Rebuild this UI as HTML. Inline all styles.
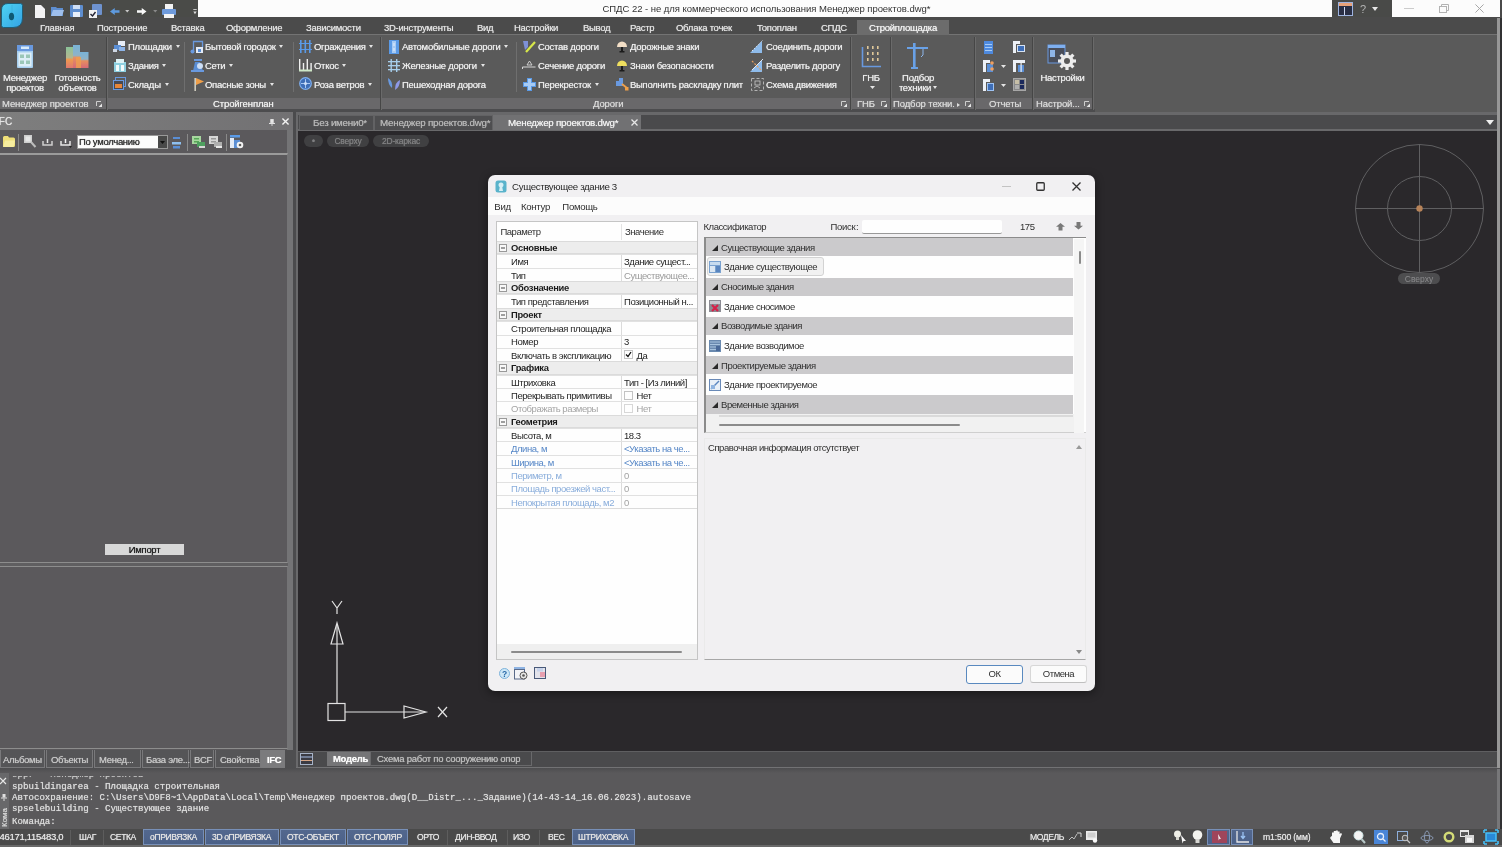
<!DOCTYPE html>
<html lang="ru">
<head>
<meta charset="utf-8">
<title>СПДС 22 - Менеджер проектов.dwg</title>
<style>
*{box-sizing:border-box;margin:0;padding:0}
html,body{width:1502px;height:847px;overflow:hidden;background:#4a4a4a}
body{font-family:"Liberation Sans",sans-serif;font-size:10px;color:#e6e6e6;position:relative}
#root{position:absolute;left:0;top:0;width:1502px;height:847px;overflow:hidden;filter:blur(0.7px);opacity:.999;will-change:transform}
.a{position:absolute}
.t{position:absolute;white-space:nowrap;line-height:12px;text-shadow:0 0 .7px currentColor}
svg{position:absolute;overflow:visible}
/* top */
#titledark{left:0;top:0;width:197.6px;height:19px;background:#4b4c49}
#titlewhite{left:197.6px;top:0;width:1302px;height:18px;background:#fdfdfd}
#titletools{left:1332px;top:0;width:60px;height:18px;background:#4a4b49}
#tabrow{left:0;top:17px;width:1502px;height:18px;background:#4c4c4c}
#ribbon{left:0;top:34.3px;width:1502px;height:74.7px;background:#5b5b5b;border-top:1.5px solid #747474}
#ribbonlab{left:0;top:98px;width:1094px;height:11px;background:#6a696b}
#ribbonbot{left:0;top:109px;width:1502px;height:6px;background:#4d4d4f}
.rt{top:22px;font-size:9.5px;letter-spacing:-0.27px;color:#e2e2e2}
.ri{font-size:9.5px;letter-spacing:-0.27px;color:#ececec}
.rl{top:98.2px;font-size:9.5px;letter-spacing:-0.12px;color:#d8d8d8;line-height:11px}
.vsep{position:absolute;top:37px;width:2.4px;height:72.5px;background:linear-gradient(90deg,#474747 0,#474747 55%,#6b6b6b 56%)}
.isep{position:absolute;top:42px;width:1px;height:50px;background:#707070}
.dd{display:inline-block;width:0;height:0;border-left:2.5px solid transparent;border-right:2.5px solid transparent;border-top:3px solid #e6e6e6;margin-left:3.8px;vertical-align:2px}
.ptab{top:750px;height:18px;border:1px solid #7a7a7c;border-top:0;background:#565658}
.pt{top:754px;font-size:9.5px;letter-spacing:-0.3px;color:#c8c8c8}
.dt{top:117px;font-size:9.8px;letter-spacing:-0.25px;color:#b6b6b6}
.pill{top:135px;height:12px;border-radius:6px;background:#414143}
.pl{top:135px;font-size:8.5px;color:#808082;text-align:center;letter-spacing:-0.2px}
.cm{font-family:"Liberation Mono",monospace;font-size:9.13px;color:#dcdcdc;line-height:12px}
.sb{top:829px;height:16px;background:linear-gradient(#54698f,#4c6289);border:1px solid #7890b8}
.st{top:831px;font-size:8.6px;letter-spacing:-0.4px;color:#e4e4e4}
#dlg{left:488px;top:175px;width:607px;height:515.5px;background:#f2f1f3;border-radius:7px;box-shadow:0 2px 10px rgba(0,0,0,.45)}
.d{font-size:9.5px;letter-spacing:-0.45px;color:#303030;line-height:12px;text-shadow:none}
.gs{left:497px;width:200px;height:13.4px;background:#eeeeee;border-top:1px solid #dcdcdc;border-bottom:1px solid #dcdcdc}
.gr{left:497px;width:200px;height:13.4px;border-top:1px solid #e2e2e2}
.gb{font-weight:bold;font-size:9.4px;letter-spacing:-0.3px;color:#1c1c1c}
/* left panel */
#lp{left:0;top:115px;width:292px;height:655px;background:#5c5a5d}
#lphead{left:0;top:112px;width:292.5px;height:18.3px;background:linear-gradient(90deg,#7f7f7f,#737274)}
/* canvas */
#canvas{left:298px;top:130px;width:1199px;height:621px;background:#2b292c}
/* bottom */
#cmd{left:0;top:770px;width:1502px;height:60px;background:#5b5a5c}
#status{left:0;top:829px;width:1502px;height:18px;background:#4b4b4b}
</style>
</head>
<body>
<div id="root">
<!-- TOP BARS -->
<div class="a" id="titlewhite"></div>
<div class="a" id="titledark"></div>
<div class="a" id="titletools"></div>
<div class="a" id="tabrow"></div>
<div class="a" id="ribbon"></div>
<div class="a" id="ribbonlab"></div>
<div class="a" id="ribbonbot"></div>
<!-- title -->
<div class="t" style="left:602.5px;top:3px;font-size:9.5px;letter-spacing:-0.04px;color:#333;text-shadow:none">СПДС 22 - не для коммерческого использования Менеджер проектов.dwg*</div>
<!-- logo -->
<svg style="left:1px;top:3px" width="22" height="25" viewBox="0 0 22 25"><defs><linearGradient id="lg" x1="0" y1="0" x2="1" y2="1"><stop offset="0" stop-color="#4fd4f2"/><stop offset="1" stop-color="#35a4e6"/></linearGradient></defs><path d="M7 0.500H19.500Q21.500 0.500 21.500 2.500V15Q21.500 24.500 12 24.500H2.500Q0.500 24.500 0.500 22.500V7Q0.500 0.500 7 0.500z" fill="url(#lg)" stroke="#1f5f78" stroke-width="1"/><path d="M11 2v21" stroke="#3cb4e0" stroke-width="1"/><ellipse cx="10.500" cy="13.500" rx="2.600" ry="3.800" fill="#0f5a74"/></svg>
<!-- quick access icons -->
<svg style="left:35px;top:5px" width="10" height="13" viewBox="0 0 10 13"><path d="M0 0h6l4 4v9H0z" fill="#f4f4f4"/></svg>
<svg style="left:51px;top:6px" width="13" height="11" viewBox="0 0 13 11"><path d="M0 1h5l1 1h6v8H0z" fill="#5f8fd0"/><path d="M2 4h11l-2 6H0z" fill="#9fc0ee"/></svg>
<svg style="left:70px;top:5px" width="13" height="12" viewBox="0 0 13 12"><rect width="13" height="12" rx="1" fill="#5f8fd0"/><rect x="3" y="0" width="7" height="4" fill="#cfe0f7"/><rect x="3" y="7" width="7" height="5" fill="#e8f0fb"/></svg>
<svg style="left:89px;top:4px" width="13" height="14" viewBox="0 0 13 14"><rect x="3" y="0" width="10" height="11" rx="1" fill="#6f93cf"/><rect x="0" y="6" width="8" height="8" fill="#f4f4f4"/><path d="M1.5 10l2 2 3-4" stroke="#223" stroke-width="1.4" fill="none"/></svg>
<svg style="left:110px;top:7.500px" width="9.500" height="7" viewBox="0 0 10 9" preserveAspectRatio="none"><path d="M5 0L0 4.5 5 9V6h5V3H5z" fill="#5f9be0"/></svg>
<svg style="left:125px;top:10px" width="4.500" height="2.500" viewBox="0 0 5 3"><path d="M0 0h5L2.5 3z" fill="#c8c8c8"/></svg>
<svg style="left:137px;top:7.500px" width="9.500" height="7" viewBox="0 0 10 9" preserveAspectRatio="none"><path d="M5 0l5 4.5L5 9V6H0V3h5z" fill="#fafafa"/></svg>
<svg style="left:152.500px;top:10px" width="4.500" height="2.500" viewBox="0 0 5 3"><path d="M0 0h5L2.5 3z" fill="#8a8a8a"/></svg>
<svg style="left:162px;top:4px" width="14" height="14" viewBox="0 0 14 14"><rect x="3" y="0" width="8" height="5" fill="#f4f4f4"/><rect x="0" y="5" width="14" height="6" rx="1" fill="#6f9bdc"/><rect x="2" y="10" width="10" height="4" fill="#f4f4f4"/></svg>
<svg style="left:192.500px;top:9px" width="4" height="6" viewBox="0 0 4 7"><rect y="0" width="4" height="1" fill="#ddd"/><path d="M0 3h4L2 6z" fill="#ddd"/></svg>
<!-- right title tools -->
<svg style="left:1338px;top:2px" width="15" height="14" viewBox="0 0 15 14"><rect x="0.5" y="0.5" width="14" height="13" fill="#2a2f45" stroke="#9fb4e0"/><rect x="1" y="1" width="13" height="3" fill="#e8a27a"/><rect x="6" y="5" width="1" height="8" fill="#cfd8f0"/></svg>
<div class="t" style="left:1360px;top:2.5px;font-size:11px;color:#b4b4b4;text-shadow:none">?</div>
<svg style="left:1372px;top:7px" width="6" height="4" viewBox="0 0 6 4"><path d="M0 0h6L3 4z" fill="#e8e8e8"/></svg>
<svg style="left:1404px;top:8px" width="10" height="2" viewBox="0 0 10 2"><rect width="10" height="1" fill="#cdcdcd"/></svg>
<svg style="left:1438.5px;top:3.5px" width="10" height="9" viewBox="0 0 10 9"><rect x="0.5" y="2.5" width="7" height="6" fill="none" stroke="#b4b4b4"/><path d="M2.5 2.5v-2h7v6h-2" fill="none" stroke="#b4b4b4"/></svg>
<svg style="left:1475px;top:3.5px" width="9" height="9" viewBox="0 0 10 10"><path d="M0.5 0.5l9 9M9.5 0.5l-9 9" stroke="#a8a8a8" stroke-width="1.1"/></svg>
<!-- ribbon tabs -->
<div class="a" style="left:857px;top:20px;width:92px;height:15px;background:#6d6d6d"></div>
<div class="t rt" style="left:40px">Главная</div>
<div class="t rt" style="left:97px">Построение</div>
<div class="t rt" style="left:171px">Вставка</div>
<div class="t rt" style="left:226px">Оформление</div>
<div class="t rt" style="left:306px">Зависимости</div>
<div class="t rt" style="left:384px">3D-инструменты</div>
<div class="t rt" style="left:477px">Вид</div>
<div class="t rt" style="left:514px">Настройки</div>
<div class="t rt" style="left:583px">Вывод</div>
<div class="t rt" style="left:630px">Растр</div>
<div class="t rt" style="left:676px">Облака точек</div>
<div class="t rt" style="left:757px">Топоплан</div>
<div class="t rt" style="left:821px">СПДС</div>
<div class="t rt" style="left:869px;color:#f4f4f4">Стройплощадка</div>
<div class="a" style="left:1095px;top:108px;width:407px;height:4px;background:#5b5b5b"></div>
<!-- group separators -->
<div class="vsep" style="left:106px"></div>
<div class="vsep" style="left:380px"></div>
<div class="vsep" style="left:850px"></div>
<div class="vsep" style="left:890px"></div>
<div class="vsep" style="left:974px"></div>
<div class="vsep" style="left:1032px"></div>
<div class="vsep" style="left:1092px"></div>
<div class="isep" style="left:184px"></div>
<div class="isep" style="left:293px"></div>
<div class="isep" style="left:516px"></div>
<!-- group 1 -->
<svg style="left:16.500px;top:45px" width="16" height="23" viewBox="0 0 16 23"><rect x="0" y="0" width="16" height="23" rx="1" fill="#a8d0f0"/><rect x="0" y="0" width="16" height="6" fill="#6a9ae0"/><rect x="4" y="1.500" width="8" height="2.500" fill="#d8ecfc"/><rect x="1.500" y="7.500" width="13" height="14" fill="#dff0f8"/><g fill="#9cc8b8"><rect x="3" y="9.500" width="4" height="3.500"/><rect x="9" y="9.500" width="4" height="3.500"/><rect x="3" y="15.500" width="4" height="3.500"/><rect x="9" y="15.500" width="4" height="3.500"/></g></svg>
<svg style="left:66px;top:45px" width="23" height="23" viewBox="0 0 23 23"><defs><linearGradient id="g2" x1="0" y1="0" x2="0" y2="1"><stop offset="0" stop-color="#7ab4d8"/><stop offset=".45" stop-color="#8fb4c8"/><stop offset=".55" stop-color="#e89060"/><stop offset="1" stop-color="#d86a78"/></linearGradient><linearGradient id="g3" x1="0" y1="0" x2="0" y2="1"><stop offset="0" stop-color="#8cc49a"/><stop offset=".5" stop-color="#b4b890"/><stop offset=".6" stop-color="#f09a50"/><stop offset="1" stop-color="#e07a70"/></linearGradient></defs><rect x="0" y="2" width="7" height="21" fill="url(#g3)"/><rect x="7" y="0" width="7" height="23" fill="url(#g2)"/><rect x="14" y="7" width="8.500" height="16" fill="url(#g2)"/><rect x="10" y="12" width="5" height="11" fill="#f0a050" opacity=".8"/></svg>
<div class="t ri" style="left:0;top:72.7px;width:50px;text-align:center;line-height:10px">Менеджер<br>проектов</div>
<div class="t ri" style="left:50px;top:72.7px;width:55px;text-align:center;line-height:10px">Готовность<br>объектов</div>
<div class="t rl" style="left:2px">Менеджер проектов</div>
<!-- group 2 -->
<div class="t ri" style="left:128px;top:40.6px">Площадки<i class="dd"></i></div>
<div class="t ri" style="left:128px;top:59.6px">Здания<i class="dd"></i></div>
<div class="t ri" style="left:128px;top:78.6px">Склады<i class="dd"></i></div>
<div class="t ri" style="left:205px;top:40.6px">Бытовой городок<i class="dd"></i></div>
<div class="t ri" style="left:205px;top:59.6px">Сети<i class="dd"></i></div>
<div class="t ri" style="left:205px;top:78.6px">Опасные зоны<i class="dd"></i></div>
<div class="t ri" style="left:314px;top:40.6px">Ограждения<i class="dd"></i></div>
<div class="t ri" style="left:314px;top:59.6px">Откос<i class="dd"></i></div>
<div class="t ri" style="left:314px;top:78.6px">Роза ветров<i class="dd"></i></div>
<div class="t rl" style="left:213px;color:#f0f0f0">Стройгенплан</div>
<!-- group 3 -->
<div class="t ri" style="left:402px;top:40.6px">Автомобильные дороги<i class="dd"></i></div>
<div class="t ri" style="left:402px;top:59.6px">Железные дороги<i class="dd"></i></div>
<div class="t ri" style="left:402px;top:78.6px">Пешеходная дорога</div>
<div class="t ri" style="left:538px;top:40.6px">Состав дороги</div>
<div class="t ri" style="left:538px;top:59.6px">Сечение дороги</div>
<div class="t ri" style="left:538px;top:78.6px">Перекресток<i class="dd"></i></div>
<div class="t ri" style="left:630px;top:40.6px">Дорожные знаки</div>
<div class="t ri" style="left:630px;top:59.6px">Знаки безопасности</div>
<div class="t ri" style="left:630px;top:78.6px">Выполнить раскладку плит</div>
<div class="t ri" style="left:766px;top:40.6px">Соединить дороги</div>
<div class="t ri" style="left:766px;top:59.6px">Разделить дорогу</div>
<div class="t ri" style="left:766px;top:78.6px">Схема движения</div>
<div class="t rl" style="left:593px">Дороги</div>
<!-- group 4-7 -->
<div class="t ri" style="left:851px;top:71.7px;width:40px;text-align:center">ГНБ</div>
<div class="t rl" style="left:857px">ГНБ</div>
<div class="t ri" style="left:892px;top:72.7px;width:52px;text-align:center;line-height:10px">Подбор<br>техники<i class="dd" style="margin-left:2px"></i></div>
<div class="t rl" style="left:893px">Подбор техни.</div>
<div class="t rl" style="left:989px">Отчеты</div>
<div class="t ri" style="left:1034px;top:71.7px;width:57px;text-align:center">Настройки</div>
<div class="t rl" style="left:1036px">Настрой...</div>

<!-- small icons group 2 -->
<svg style="left:113px;top:41px" width="13" height="12" viewBox="0 0 13 12"><rect x="5" y="0" width="7" height="5" fill="#e8eef8"/><rect x="1" y="4" width="7" height="5" fill="#5b8fd6"/><rect x="6" y="6" width="6" height="4" fill="#8fb6ea"/><rect x="0" y="8" width="4" height="3" fill="#d0d8e4"/></svg>
<svg style="left:114px;top:59px" width="12" height="13" viewBox="0 0 12 13"><rect x="0" y="3" width="12" height="10" fill="#8fd0e0"/><rect x="2" y="0" width="8" height="4" fill="#dff3f6"/><rect x="2" y="6" width="3" height="6" fill="#f4fbfc"/><rect x="7" y="6" width="3" height="6" fill="#f4fbfc"/></svg>
<svg style="left:113px;top:77px" width="13" height="13" viewBox="0 0 13 13"><rect x="2.5" y="0.5" width="10" height="9" fill="none" stroke="#6a9ae0"/><rect x="0.5" y="3.5" width="10" height="9" fill="#4a4a52" stroke="#6a9ae0"/><rect x="2" y="7" width="7" height="4" fill="#e8873a"/></svg>
<svg style="left:190px;top:40px" width="14" height="14" viewBox="0 0 14 14"><path d="M3.5 11V1.5h9V8" fill="none" stroke="#6a9ae0" stroke-width="1.3"/><circle cx="2.5" cy="11.5" r="2" fill="#6a9ae0"/><rect x="6" y="7" width="7" height="6" fill="#e4ecf8"/><rect x="8" y="9" width="3" height="3" fill="#5b8fd6"/></svg>
<svg style="left:191px;top:59px" width="13" height="13" viewBox="0 0 13 13"><rect x="3" y="0" width="8" height="2" fill="#6a9ae0"/><path d="M2 12l2-9h5l3 9z" fill="#5b8fd6"/><circle cx="9" cy="7" r="3" fill="#cfe0f6"/><rect x="0" y="11" width="13" height="2" fill="#6a9ae0"/></svg>
<svg style="left:194px;top:77px" width="10" height="14" viewBox="0 0 10 14"><rect x="0.5" y="1" width="1.3" height="13" fill="#ece8d8"/><path d="M2 1l8 3.5L2 8z" fill="#f0a04a"/></svg>
<svg style="left:299px;top:40px" width="13" height="13" viewBox="0 0 13 13"><g fill="#5b9be8"><rect x="1" y="0" width="1.6" height="13"/><rect x="5.5" y="0" width="1.6" height="13"/><rect x="10" y="0" width="1.6" height="13"/><rect x="0" y="3" width="13" height="1"/><rect x="0" y="9" width="13" height="1"/></g></svg>
<svg style="left:299px;top:59px" width="13" height="13" viewBox="0 0 13 13"><g fill="#f0f0f0"><rect x="0" y="0" width="1.4" height="11"/><rect x="3.8" y="4" width="1.4" height="7"/><rect x="7.6" y="0" width="1.4" height="11"/><rect x="11.4" y="4" width="1.4" height="7"/></g><rect x="0" y="10.5" width="13" height="2" fill="#cfe8c8"/></svg>
<svg style="left:299px;top:77px" width="13" height="13" viewBox="0 0 13 13"><circle cx="6.5" cy="6.5" r="5.8" fill="#3f6fb8" stroke="#7fb0f0" stroke-width="1.2"/><path d="M6.5 2v9M2 6.5h9" stroke="#a8c8f4" stroke-width="1"/><circle cx="6.5" cy="6.5" r="1.5" fill="#cfe0f8"/></svg>
<!-- small icons group 3 -->
<svg style="left:389px;top:40px" width="10" height="14" viewBox="0 0 10 14"><rect x="0" y="0" width="10" height="14" fill="#5b9be8"/><rect x="3" y="1" width="4" height="12" fill="#a8ccf6"/><rect x="4.5" y="3" width="1" height="3" fill="#e8f0fc"/><rect x="4.5" y="8" width="1" height="3" fill="#e8f0fc"/></svg>
<svg style="left:388px;top:59px" width="12" height="13" viewBox="0 0 12 13"><g fill="#a8d0ee"><rect x="2.5" y="0" width="1.4" height="13"/><rect x="8" y="0" width="1.4" height="13"/><rect x="0" y="2" width="12" height="1.3"/><rect x="0" y="6" width="12" height="1.3"/><rect x="0" y="10" width="12" height="1.3"/></g></svg>
<svg style="left:388px;top:78px" width="12" height="12" viewBox="0 0 12 12"><path d="M0 0q5 3 4 10Q0 7 0 0z" fill="#6a9ae0"/><path d="M12 2q-5 2-5 10 5-3 5-10z" fill="#8f9ae8"/></svg>
<svg style="left:522px;top:40px" width="14" height="13" viewBox="0 0 14 13"><path d="M1 1h5v6l-3 3z" fill="#7f92d8"/><path d="M4 12L13 2" stroke="#d8e84a" stroke-width="2.2"/></svg>
<svg style="left:522px;top:59px" width="14" height="12" viewBox="0 0 14 12"><path d="M0.5 10V8h13" fill="none" stroke="#d8d8d8" stroke-width="1"/><path d="M5 6l2.500-4 2.500 4z" fill="none" stroke="#d8d8d8" stroke-width="0.9"/></svg>
<svg style="left:523px;top:78px" width="13" height="13" viewBox="0 0 13 13"><path d="M4 0h5v4h4v5H9v4H4V9H0V4h4z" fill="#5b9be8"/><path d="M5 1h3v4h4v3H8v4H5V8H1V5h4z" fill="#a8ccf6"/></svg>
<svg style="left:617px;top:40px" width="10" height="13" viewBox="0 0 10 13"><path d="M0 7a5 5.500 0 0110 0z" fill="#f4e0c8"/><rect x="4" y="7" width="2" height="5" fill="#1c1c1c"/><rect x="2.500" y="11" width="5" height="1.500" fill="#1c1c1c"/></svg>
<svg style="left:617px;top:59px" width="10" height="13" viewBox="0 0 10 13"><path d="M0 7a5 5.500 0 0110 0z" fill="#f0e060"/><rect x="4" y="7" width="2" height="5" fill="#1c1c1c"/><rect x="2.500" y="11" width="5" height="1.500" fill="#1c1c1c"/></svg>
<svg style="left:616px;top:78px" width="13" height="13" viewBox="0 0 13 13"><path d="M0 3h3V0h4v8H0z" fill="#6a9ae0"/><path d="M6 6l5 4" stroke="#f0a04a" stroke-width="1.800"/><rect x="9" y="9" width="3.500" height="3.500" fill="#f0a04a"/></svg>
<svg style="left:750px;top:40px" width="14" height="13" viewBox="0 0 14 13"><path d="M0 13L12 1v12z" fill="#8fbcec"/><path d="M2 11L13 0" stroke="#dfe8f4" stroke-width="1" stroke-dasharray="1.500 1.500"/></svg>
<svg style="left:750px;top:59px" width="14" height="13" viewBox="0 0 14 13"><path d="M0 13L12 1v12z" fill="#8fbcec"/><path d="M2 2l10 10" stroke="#e8a060" stroke-width="1.200" stroke-dasharray="2 1.500"/><path d="M2 11L13 0" stroke="#dfe8f4" stroke-width="1"/></svg>
<svg style="left:751px;top:78px" width="13" height="13" viewBox="0 0 13 13"><rect x="0.500" y="0.500" width="12" height="12" fill="none" stroke="#b4b4b4" stroke-width="1" stroke-dasharray="3 2"/><rect x="4" y="3" width="5" height="4" fill="none" stroke="#c8c8c8" stroke-width="0.800"/><path d="M3 10l3-2 3 2" fill="none" stroke="#c8c8c8" stroke-width="0.800"/></svg>
<!-- big icons group 4,5,7 -->
<svg style="left:861px;top:44px" width="20" height="25" viewBox="0 0 20 25"><path d="M1.500 3v19.500H20" fill="none" stroke="#6a9ae0" stroke-width="1.600"/><g fill="#e0c89a"><rect x="6" y="2" width="1.600" height="3"/><rect x="11" y="2" width="1.600" height="3"/><rect x="16" y="2" width="1.600" height="3"/><rect x="6" y="8" width="1.600" height="3"/><rect x="11" y="8" width="1.600" height="3"/><rect x="16" y="8" width="1.600" height="3"/><rect x="6" y="14" width="1.600" height="3"/><rect x="11" y="14" width="1.600" height="3"/><rect x="16" y="14" width="1.600" height="3"/></g></svg>
<svg style="left:870px;top:86px" width="5" height="3" viewBox="0 0 5 3"><path d="M0 0h5L2.500 3z" fill="#e6e6e6"/></svg>
<svg style="left:907px;top:43px" width="22" height="27" viewBox="0 0 22 27"><rect x="6" y="0" width="2.600" height="26" fill="#6aa2e8"/><rect x="0" y="4" width="21" height="2" fill="#6aa2e8"/><path d="M16 6v6l-2 2" fill="none" stroke="#8fb8ec" stroke-width="1"/><rect x="4" y="24" width="7" height="2" fill="#6aa2e8"/></svg>
<svg style="left:1047px;top:44px" width="30" height="27" viewBox="0 0 30 27"><rect x="1" y="1" width="17" height="18" fill="#4a4f5c" stroke="#6a9ae0" stroke-width="1"/><rect x="1" y="1" width="17" height="3" fill="#7fb0f0"/><rect x="3" y="6" width="5" height="7" fill="#8fb6ea"/><g transform="translate(20,17)"><circle r="6.500" fill="#eeeeee"/><g fill="#eeeeee"><rect x="-1.600" y="-9" width="3.200" height="18"/><rect x="-9" y="-1.600" width="18" height="3.200"/><rect x="-1.600" y="-9" width="3.200" height="18" transform="rotate(45)"/><rect x="-1.600" y="-9" width="3.200" height="18" transform="rotate(-45)"/></g><circle r="3" fill="#5b5b5b"/></g></svg>
<!-- reports small icons -->
<svg style="left:984px;top:41px" width="9" height="13" viewBox="0 0 9 13"><rect width="9" height="13" fill="#4f8be0"/><rect x="1" y="3" width="7" height="1" fill="#a8ccf6"/><rect x="1" y="6" width="7" height="1" fill="#a8ccf6"/><rect x="1" y="9" width="7" height="1" fill="#a8ccf6"/></svg>
<svg style="left:983px;top:60px" width="12" height="12" viewBox="0 0 12 12"><path d="M0 0h7v3H3v9H0z" fill="#eef2f8"/><rect x="4" y="4" width="6" height="8" fill="#5b8fd6"/><circle cx="9" cy="3" r="1.800" fill="#f0a060"/><circle cx="9" cy="9" r="1.800" fill="#f0a060"/></svg>
<svg style="left:983px;top:79px" width="12" height="12" viewBox="0 0 12 12"><path d="M0 0h7v3H3v9H0z" fill="#eef2f8"/><rect x="4.500" y="4.500" width="6" height="7" fill="#3f6fb8" stroke="#9fc4f4" stroke-width="1"/></svg>
<svg style="left:1001px;top:65px" width="5" height="3" viewBox="0 0 5 3"><path d="M0 0h5L2.500 3z" fill="#e6e6e6"/></svg>
<svg style="left:1001px;top:84px" width="5" height="3" viewBox="0 0 5 3"><path d="M0 0h5L2.500 3z" fill="#e6e6e6"/></svg>
<svg style="left:1013px;top:41px" width="12" height="12" viewBox="0 0 12 12"><path d="M0 0h7v3H3v9H0z" fill="#eef2f8"/><rect x="4.500" y="4.500" width="7" height="6" fill="#3f6fb8" stroke="#d8e4f4" stroke-width="1"/></svg>
<svg style="left:1013px;top:60px" width="12" height="12" viewBox="0 0 12 12"><path d="M0 0h12v3H3v9H0z" fill="#eef2f8"/><rect x="5" y="5" width="6" height="7" fill="#5b8fd6"/><rect x="7.500" y="3" width="1.200" height="9" fill="#eef2f8"/></svg>
<svg style="left:1013px;top:78px" width="13" height="13" viewBox="0 0 13 13"><rect x="0.500" y="0.500" width="12" height="12" fill="#8a8a8a" stroke="#a8a8a8"/><rect x="2" y="2" width="4" height="4" fill="#c8c0a8"/><rect x="7" y="2" width="4" height="4" fill="#1c2a5c"/><rect x="2" y="7" width="4" height="4" fill="#b0b0b0"/><rect x="7" y="7" width="4" height="4" fill="#1c2a5c"/></svg>
<!-- launchers -->
<svg class="ln" style="left:96px;top:101px" width="6" height="6" viewBox="0 0 6 6"><path d="M0.500 5V0.500H5" fill="none" stroke="#cfcfcf"/><path d="M6 2.500V6H2.500z" fill="#e8e8e8"/></svg>
<svg class="ln" style="left:841px;top:101px" width="6" height="6" viewBox="0 0 6 6"><path d="M0.500 5V0.500H5" fill="none" stroke="#cfcfcf"/><path d="M6 2.500V6H2.500z" fill="#e8e8e8"/></svg>
<svg class="ln" style="left:881px;top:101px" width="6" height="6" viewBox="0 0 6 6"><path d="M0.500 5V0.500H5" fill="none" stroke="#cfcfcf"/><path d="M6 2.500V6H2.500z" fill="#e8e8e8"/></svg>
<svg class="ln" style="left:965px;top:101px" width="6" height="6" viewBox="0 0 6 6"><path d="M0.500 5V0.500H5" fill="none" stroke="#cfcfcf"/><path d="M6 2.500V6H2.500z" fill="#e8e8e8"/></svg>
<svg class="ln" style="left:1084px;top:101px" width="6" height="6" viewBox="0 0 6 6"><path d="M0.500 5V0.500H5" fill="none" stroke="#cfcfcf"/><path d="M6 2.500V6H2.500z" fill="#e8e8e8"/></svg>
<svg style="left:957px;top:103px" width="3" height="4" viewBox="0 0 3 4"><path d="M0 0l3 2-3 2z" fill="#e0e0e0"/></svg>

<!-- LEFT PANEL -->
<div class="a" id="lp"></div>
<div class="a" id="lphead"></div>
<!-- left panel -->
<div class="a" style="left:287px;top:130px;width:5.500px;height:620px;background:#757577"></div>
<div class="a" style="left:293px;top:112px;width:3px;height:658px;background:#4c4c4e"></div>
<div class="a" style="left:296px;top:112px;width:2.500px;height:658px;background:#6a6a6c"></div>
<div class="t" style="left:-4px;top:115.500px;font-size:10px;color:#e4e4e4">IFC</div>
<svg style="left:268.500px;top:118.500px" width="6" height="7" viewBox="0 0 7 8"><rect x="1.500" y="0" width="4" height="4.500" fill="#e8e8e8"/><rect x="0" y="4.500" width="7" height="1.200" fill="#e8e8e8"/><rect x="3" y="5.500" width="1" height="2.500" fill="#e8e8e8"/></svg>
<svg style="left:281.500px;top:118px" width="7" height="7" viewBox="0 0 8 8"><path d="M0.500 0.500l7 7M7.500 0.500l-7 7" stroke="#f4f4f4" stroke-width="1.600"/></svg>
<!-- toolbar -->
<svg style="left:3px;top:136px" width="12" height="11" viewBox="0 0 12 11"><path d="M0 1.500Q0 0 1.500 0H5l1 1.500h4.500Q12 1.500 12 3v6.500Q12 11 10.500 11h-9Q0 11 0 9.500z" fill="#f0e07a"/><path d="M2 4.500h10l-1.500 6.500H0z" fill="#f8eea0"/></svg>
<div class="a" style="left:18px;top:134px;width:1px;height:17px;background:#8a8a8a"></div>
<svg style="left:24px;top:135px" width="12" height="13" viewBox="0 0 12 13"><rect x="0" y="0" width="8" height="8" fill="#cfcfcf"/><rect x="1.500" y="1.500" width="5" height="5" fill="#e8e8e8"/><path d="M7 7l4.500 5" stroke="#bdbdbd" stroke-width="2"/></svg>
<svg style="left:42px;top:139px" width="11" height="8" viewBox="0 0 11 8"><path d="M1 2v4h9V2" fill="none" stroke="#d0d0d0" stroke-width="1.500"/><path d="M5.500 0v4" stroke="#e8e8e8" stroke-width="1.500"/></svg>
<svg style="left:60px;top:139px" width="12" height="9" viewBox="0 0 12 9"><path d="M1 2v4h9V2" fill="none" stroke="#e8e8e8" stroke-width="1.500"/><path d="M5.500 0v4" stroke="#f4f4f4" stroke-width="1.500"/><path d="M9 7h3l-1.500 2z" fill="#222"/></svg>
<div class="a" style="left:77px;top:135px;width:91px;height:14px;background:#fdfdfd;border:1px solid #9a9a9a"></div>
<div class="a" style="left:158px;top:136px;width:9px;height:12px;background:#4a4a4a"></div>
<svg style="left:160px;top:141px" width="5" height="3" viewBox="0 0 5 3"><path d="M0 0h5L2.500 3z" fill="#111"/></svg>
<div class="t" style="left:79px;top:136px;font-size:9.500px;letter-spacing:-0.300px;color:#333">По умолчанию</div>
<svg style="left:172px;top:137px" width="9" height="12" viewBox="0 0 9 12"><rect x="1" y="0" width="7" height="2" fill="#5b8fd6"/><rect x="0" y="5" width="9" height="2.500" fill="#8fc0f0"/><rect x="1" y="9" width="7" height="2.500" fill="#5b8fd6"/></svg>
<div class="a" style="left:187px;top:134px;width:1px;height:17px;background:#8a8a8a"></div>
<svg style="left:192px;top:136px" width="13" height="12" viewBox="0 0 13 12"><rect x="0" y="0" width="9" height="8" fill="#a8d8a0"/><rect x="2" y="2" width="5" height="1.500" fill="#58a858"/><rect x="2" y="5" width="5" height="1.500" fill="#58a858"/><rect x="5" y="6" width="8" height="5" fill="#4fa060"/><rect x="7" y="10" width="6" height="2" fill="#d8d8d8"/></svg>
<svg style="left:209px;top:136px" width="13" height="12" viewBox="0 0 13 12"><rect x="0" y="0" width="9" height="8" fill="#d8d8d8"/><rect x="2" y="2" width="5" height="1.500" fill="#9a9a9a"/><rect x="2" y="5" width="5" height="1.500" fill="#9a9a9a"/><rect x="5" y="6" width="8" height="5" fill="#b0b0b0"/><rect x="7" y="10" width="6" height="2" fill="#eaeaea"/></svg>
<div class="a" style="left:226px;top:134px;width:1px;height:17px;background:#8a8a8a"></div>
<svg style="left:230px;top:135px" width="14" height="14" viewBox="0 0 14 14"><rect x="0" y="0" width="10" height="2.500" fill="#5b9be8"/><rect x="0" y="3" width="4" height="10" fill="#e4ecf8"/><rect x="4" y="5" width="6" height="8" fill="#5b8fd6"/><circle cx="10" cy="10" r="3.300" fill="#f4f4f4"/><circle cx="10" cy="10" r="1.300" fill="#5b5b5b"/></svg>
<!-- boxes -->
<div class="a" style="left:-1px;top:153px;width:289px;height:410px;border:1px solid #8e8e8e;border-top:2px solid #9c9c9c;border-right-color:#757577"></div>
<div class="a" style="left:-1px;top:563px;width:289px;height:4px;background:#616062"></div>
<div class="a" style="left:-1px;top:566px;width:289px;height:183px;border:1px solid #8e8e8e;border-right-color:#757577"></div>
<div class="a" style="left:105px;top:544px;width:79px;height:11px;background:#d9d9d9"></div>
<div class="t" style="left:105px;top:544px;width:79px;text-align:center;font-size:9.500px;letter-spacing:-0.300px;color:#222;line-height:11px">Импорт</div>
<!-- bottom tabs -->
<div class="a" style="left:0;top:750px;width:296px;height:18px;background:#4f4f51"></div>
<div class="a ptab" style="left:0px;width:45px"></div>
<div class="a ptab" style="left:46px;width:47px"></div>
<div class="a ptab" style="left:94px;width:47px"></div>
<div class="a ptab" style="left:142px;width:47px"></div>
<div class="a ptab" style="left:190px;width:24px"></div>
<div class="a ptab" style="left:215px;width:46px"></div>
<div class="a" style="left:261px;top:750px;width:24px;height:18px;background:#7c7c7e"></div>
<div class="t pt" style="left:3px">Альбомы</div>
<div class="t pt" style="left:51px">Объекты</div>
<div class="t pt" style="left:99px">Менед...</div>
<div class="t pt" style="left:146px">База эле...</div>
<div class="t pt" style="left:194px">BCF</div>
<div class="t pt" style="left:220px">Свойства</div>
<div class="t pt" style="left:267px;color:#fff;font-weight:bold">IFC</div>

<!-- CANVAS -->
<div class="a" id="canvas"></div>
<!-- doc tabs -->
<div class="a" style="left:296px;top:112px;width:1206px;height:3.500px;background:#69696b"></div>
<div class="a" style="left:298px;top:115px;width:1199px;height:15px;background:#4b4b4d"></div>
<div class="a" style="left:298px;top:129px;width:1199px;height:2px;background:#6a6a6c"></div>
<div class="a" style="left:1497.400px;top:18px;width:2.200px;height:751px;background:#989898"></div>

<div class="a" style="left:299px;top:115px;width:75px;height:15px;background:#4f4f51;border:1px solid #636365;border-bottom:0"></div>
<div class="a" style="left:374px;top:115px;width:119px;height:15px;background:#4f4f51;border:1px solid #636365;border-bottom:0"></div>
<div class="a" style="left:493px;top:115px;width:148px;height:15px;background:#727274"></div>
<div class="t dt" style="left:313px">Без имени0*</div>
<div class="t dt" style="left:380px">Менеджер проектов.dwg*</div>
<div class="t dt" style="left:508px;color:#f2f2f2">Менеджер проектов.dwg*</div>
<svg style="left:631px;top:119px" width="7" height="7" viewBox="0 0 7 7"><path d="M0.500 0.500l6 6M6.500 0.500l-6 6" stroke="#e8e8e8" stroke-width="1.300"/></svg>
<svg style="left:1486px;top:120px" width="8" height="5" viewBox="0 0 8 5"><path d="M0 0h8L4 5z" fill="#f0f0f0"/></svg>
<!-- view pills -->
<div class="a pill" style="left:304px;width:19px"></div>
<div class="a pill" style="left:327px;width:42px"></div>
<div class="a pill" style="left:373px;width:56px"></div>
<div class="t pl" style="left:304px;width:19px">•</div>
<div class="t pl" style="left:327px;width:42px">Сверху</div>
<div class="t pl" style="left:373px;width:56px">2D-каркас</div>
<!-- compass -->
<svg style="left:1350px;top:140px" width="140" height="150" viewBox="0 0 140 150"><g fill="none" stroke="#606062" stroke-width="1"><circle cx="69.500" cy="68.500" r="64"/><circle cx="69.500" cy="68.500" r="32"/><path d="M69.500 4v130M5 68.500h129"/></g><circle cx="69.500" cy="68.500" r="3.200" fill="#b8845a"/><rect x="48" y="133" width="42" height="11" rx="5.500" fill="#4e4e50"/><text x="69" y="142" font-family="Liberation Sans, sans-serif" font-size="8.500" fill="#8c8c8e" text-anchor="middle">Сверху</text></svg>
<!-- ucs -->
<svg style="left:320px;top:595px" width="140" height="135" viewBox="0 0 140 135"><g fill="none" stroke="#e4e4e4" stroke-width="1.200"><rect x="8" y="108.500" width="17" height="17"/><path d="M17 108V30M25 117h80"/><path d="M17 28l-6 21h12z"/><path d="M106 117l-22-6v12z"/><path d="M12 6l5 7 5-7M17 13v6"/><path d="M118 112l9 10M127 112l-9 10"/></g></svg>
<!-- model tabs -->
<div class="a" style="left:298px;top:750.500px;width:1199px;height:2px;background:#606062"></div>
<div class="a" style="left:298px;top:752px;width:1199px;height:15px;background:#4b4b4d"></div>
<div class="a" style="left:296px;top:766.800px;width:1201px;height:2.200px;background:#737375"></div>
<svg style="left:300px;top:753px" width="13" height="12" viewBox="0 0 13 12"><rect x="0.500" y="0.500" width="12" height="11" fill="#3c3c44" stroke="#a8b4c8"/><rect x="1" y="3.500" width="11" height="1" fill="#a8c0e8"/><rect x="1" y="7" width="11" height="1" fill="#d8a888"/></svg>
<div class="a" style="left:327px;top:752px;width:43px;height:14px;background:#767678"></div>
<div class="a" style="left:370px;top:752px;width:162px;height:14px;border:1px solid #6a6a6c;border-top:0"></div>
<div class="t" style="left:333px;top:753px;font-size:9.500px;letter-spacing:-0.300px;color:#fafafa;font-weight:bold">Модель</div>
<div class="t" style="left:377px;top:753px;font-size:9.500px;letter-spacing:-0.250px;color:#bdbdbd">Схема работ по сооружению опор</div>

<!-- BOTTOM -->
<div class="a" id="cmd"></div>
<div class="a" id="status"></div>
<!-- command area -->
<div class="a" style="left:0;top:768px;width:1502px;height:5px;background:linear-gradient(#4e4e50,#5b5a5c)"></div>
<div class="a" style="left:0;top:773px;width:9px;height:56px;background:#69696b"></div>
<svg style="left:0px;top:778px" width="6" height="6" viewBox="0 0 6 6"><path d="M0 0l6 6M6 0l-6 6" stroke="#e8e8e8" stroke-width="1.200"/></svg>
<div class="a" style="left:12px;top:775.500px;width:300px;height:8px;overflow:hidden"><div class="t cm" style="left:0;top:-6.500px;color:#c8c8c8">sppr - Менеджер проектов</div></div>
<div class="t cm" style="left:12px;top:780.5px">spbuildingarea - Площадка строительная</div>
<div class="t cm" style="left:12px;top:791.8px">Автосохранение: C:\Users\D9F8~1\AppData\Local\Temp\Менеджер проектов.dwg(D__Distr_..._Задание)(14-43-14_16.06.2023).autosave</div>
<div class="t cm" style="left:12px;top:803.2px">spselebuilding - Существующее здание</div>
<div class="t cm" style="left:12px;top:816px">Команда:</div>
<div class="t" style="left:9px;top:818px;font-size:8px;color:#d8d8d8;transform:rotate(-90deg);transform-origin:0 100%;line-height:9px">Кома</div>
<svg style="left:1px;top:794px" width="6" height="7" viewBox="0 0 6 7"><rect x="1.500" y="0" width="3" height="3.500" fill="#e0e0e0"/><rect x="0" y="3.500" width="6" height="1" fill="#e0e0e0"/><rect x="2.500" y="4.500" width="1" height="2.500" fill="#e0e0e0"/></svg>
<!-- status bar -->
<div class="a" style="left:0;top:845px;width:1502px;height:2px;background:#6a6a6a"></div>
<div class="a sb" style="left:143px;width:61px"></div>
<div class="a sb" style="left:205px;width:74px"></div>
<div class="a sb" style="left:280px;width:66px"></div>
<div class="a sb" style="left:347px;width:61px"></div>
<div class="a sb" style="left:572px;width:63px"></div>
<div class="a" style="left:103px;top:830px;width:1px;height:15px;background:#5e5e5e"></div>
<div class="a" style="left:447px;top:830px;width:1px;height:15px;background:#5e5e5e"></div>
<div class="a" style="left:506.5px;top:830px;width:1px;height:15px;background:#5e5e5e"></div>
<div class="a" style="left:538.5px;top:830px;width:1px;height:15px;background:#5e5e5e"></div>
<div class="a" style="left:70px;top:830px;width:1px;height:15px;background:#5e5e5e"></div>

<div class="t st" style="left:-5.5px;font-size:9.5px;letter-spacing:-0.3px;top:830.5px">346171,115483,0</div>
<div class="t st" style="left:79px">ШАГ</div>
<div class="t st" style="left:110px">СЕТКА</div>
<div class="t st" style="left:150px">оПРИВЯЗКА</div>
<div class="t st" style="left:212px">3D оПРИВЯЗКА</div>
<div class="t st" style="left:287px">ОТС-ОБЪЕКТ</div>
<div class="t st" style="left:354px">ОТС-ПОЛЯР</div>
<div class="t st" style="left:417px">ОРТО</div>
<div class="t st" style="left:455px">ДИН-ВВОД</div>
<div class="t st" style="left:513px">ИЗО</div>
<div class="t st" style="left:548px">ВЕС</div>
<div class="t st" style="left:578px">ШТРИХОВКА</div>
<div class="t st" style="left:1030px;font-size:8.600px">МОДЕЛЬ</div>
<div class="t st" style="left:1263px;font-size:8.600px;letter-spacing:-0.1px">m1:500 (мм)</div>
<!-- status right icons -->
<svg style="left:1068px;top:832px" width="14" height="10" viewBox="0 0 14 10"><path d="M1 8l3-3 2 2 3-5" fill="none" stroke="#bdbdbd" stroke-width="1"/><path d="M9 1h4v4" fill="none" stroke="#d8d8d8" stroke-width="1"/></svg>
<svg style="left:1086px;top:831px" width="12" height="12" viewBox="0 0 12 12"><rect x="0" y="0" width="11" height="9" fill="#ececec"/><rect x="1.500" y="1.500" width="8" height="5" fill="#cfcfcf"/><circle cx="9" cy="9.500" r="2.200" fill="#fafafa"/></svg>
<svg style="left:1173px;top:830px" width="14" height="14" viewBox="0 0 14 14"><circle cx="4.500" cy="4" r="3.500" fill="#f0f0e8"/><rect x="3" y="7" width="3" height="3" fill="#d8d8d0"/><path d="M8 5l5 6-2.500 0-1 2.500z" fill="#fafafa"/></svg>
<svg style="left:1192px;top:830px" width="11" height="14" viewBox="0 0 11 14"><circle cx="5.500" cy="5" r="4.800" fill="#f4f4f0"/><rect x="3.500" y="9" width="4" height="4" fill="#d8d8d4"/></svg>
<div class="a sb" style="left:1207px;width:23px"></div>
<div class="a sb" style="left:1231px;width:22px"></div>
<svg style="left:1212px;top:831px" width="15" height="12" viewBox="0 0 15 12"><rect width="15" height="12" fill="#a0465c"/><path d="M6 3l3 5-1.500-.3-.8 1.800z" fill="#f4f4f4"/></svg>
<svg style="left:1235px;top:831px" width="14" height="13" viewBox="0 0 14 13"><path d="M2 0v11h12" fill="none" stroke="#e8e8e8" stroke-width="1.300"/><path d="M8 1v6M6 5l2 2.500 2-2.500" fill="none" stroke="#9cc4f4" stroke-width="1.300"/></svg>
<svg style="left:1329px;top:830px" width="14" height="14" viewBox="0 0 14 14"><path d="M3 6V2.500h1.800V1h2v-.5h2V1.500h1.800V4l1.400-1 1 1-2 4.500V13H4.500L1 8l1-1.500z" fill="#f6f6f6"/></svg>
<svg style="left:1353px;top:830px" width="13" height="14" viewBox="0 0 13 14"><circle cx="5.500" cy="5.500" r="4.500" fill="#f4f4f4" stroke="#d0e8e8" stroke-width="1"/><path d="M8.500 9l3.500 4" stroke="#b8c8c8" stroke-width="2"/></svg>
<div class="a" style="left:1374px;top:830px;width:14px;height:14px;background:#4a86d8"></div>
<svg style="left:1376px;top:832px" width="10" height="10" viewBox="0 0 10 10"><circle cx="4.500" cy="4.500" r="3" fill="none" stroke="#e8f0fc" stroke-width="1.300"/><path d="M7 7l2.500 2.500" stroke="#e8f0fc" stroke-width="1.300"/></svg>
<svg style="left:1397px;top:830px" width="14" height="14" viewBox="0 0 14 14"><rect x="0.500" y="1.500" width="10" height="9" fill="none" stroke="#8fb0dc" stroke-width="1"/><circle cx="8" cy="8" r="2.800" fill="#5a5a5a" stroke="#c8c8c8" stroke-width="1"/><path d="M10 10l3 3" stroke="#c8c8c8" stroke-width="1.300"/></svg>
<svg style="left:1420px;top:830px" width="14" height="14" viewBox="0 0 14 14"><ellipse cx="7" cy="8" rx="6" ry="2.500" fill="none" stroke="#8a9ab4" stroke-width="1"/><ellipse cx="7" cy="7" rx="2.500" ry="6" fill="none" stroke="#8a9ab4" stroke-width="1"/></svg>
<svg style="left:1443px;top:831px" width="12" height="12" viewBox="0 0 12 12"><circle cx="6" cy="6" r="4.300" fill="none" stroke="#d4dc78" stroke-width="2.400"/></svg>
<svg style="left:1460px;top:830px" width="14" height="14" viewBox="0 0 14 14"><rect x="0" y="0" width="9" height="7" fill="#e8e8e8"/><rect x="1" y="2" width="7" height="4" fill="#5a5a5a"/><rect x="5" y="5" width="9" height="8" fill="#d8d8d8"/><rect x="7" y="8" width="5" height="4" fill="#fafafa"/></svg>
<svg style="left:1484px;top:830px" width="14" height="14" viewBox="0 0 14 14"><rect x="2" y="3" width="10" height="8" fill="#2a8ad8" stroke="#48c0f8" stroke-width="1.500"/><path d="M0 0h3M0 0v3M14 0h-3M14 0v3M0 14h3M0 14v-3M14 14h-3M14 14v-3" stroke="#48c0f8" stroke-width="1.600"/></svg>
<div class="a" style="left:1497.400px;top:769px;width:2.200px;height:60px;background:#78787a"></div>
<div class="a" style="left:1499.600px;top:18px;width:3px;height:811px;background:#323234"></div>

<!-- dialog -->
<div class="a" id="dlg"></div>
<div class="a" style="left:488px;top:197px;width:607px;height:18px;background:#fdfdfd"></div>
<svg style="left:495px;top:180px" width="12" height="13" viewBox="0 0 12 13"><rect x="0.5" y="0.5" width="11" height="12" rx="2.5" fill="#5ab4cc"/><path d="M6 2.500a2.500 2.500 0 012.500 2.500q0 1.500-1.200 2.200L8 11H4l.7-3.800Q3.500 6.500 3.500 5A2.500 2.500 0 016 2.500z" fill="#d8f0f6"/></svg>
<div class="t d" style="left:512px;top:181px;font-size:9.7px;letter-spacing:-0.35px;color:#2a2a2a">Существующее здание 3</div>
<svg style="left:1002px;top:186px" width="9" height="2" viewBox="0 0 9 2"><rect width="9" height="1" fill="#c4c4c4"/></svg>
<svg style="left:1036px;top:182px" width="9" height="9" viewBox="0 0 9 9"><rect x="0.750" y="0.750" width="7.500" height="7.500" rx="1" fill="none" stroke="#333" stroke-width="1.300"/></svg>
<svg style="left:1072px;top:182px" width="9" height="9" viewBox="0 0 9 9"><path d="M0.500 0.500l8 8M8.500 0.500l-8 8" stroke="#333" stroke-width="1.300"/></svg>
<div class="t d" style="left:494.3px;top:201px;font-size:9.6px;letter-spacing:-0.3px">Вид</div>
<div class="t d" style="left:521px;top:201px;font-size:9.6px;letter-spacing:-0.3px">Контур</div>
<div class="t d" style="left:562.3px;top:201px;font-size:9.6px;letter-spacing:-0.3px">Помощь</div>
<div class="a" style="left:496px;top:221px;width:202px;height:439px;background:#fff;border:1px solid #c6c6c6"></div>
<div class="t d" style="left:500.400px;top:226px">Параметр</div>
<div class="t d" style="left:625px;top:226px">Значение</div>
<div class="a" style="left:621px;top:224px;width:1px;height:16px;background:#e4e4e4"></div>
<div class="a" style="left:621px;top:254.4px;width:1px;height:253.8px;background:#dcdcdc"></div>
<div class="a gs" style="top:241.0px"></div>
<svg style="left:499px;top:244.0px" width="8" height="8" viewBox="0 0 8 8"><rect x="0.500" y="0.500" width="7" height="7" fill="#fafafa" stroke="#9a9a9a"/><rect x="2" y="3.500" width="4" height="1" fill="#444"/></svg>
<div class="t d gb" style="left:511px;top:242.0px">Основные</div>
<div class="a gr" style="top:254.4px"></div>
<div class="t d" style="left:511px;top:256.3px;color:#262626">Имя</div>
<div class="t d" style="left:624px;top:256.3px;color:#262626">Здание сущест...</div>
<div class="a gr" style="top:267.7px"></div>
<div class="t d" style="left:511px;top:269.6px;color:#262626">Тип</div>
<div class="t d" style="left:624px;top:269.6px;color:#262626"><span style="color:#9c9c9c">Существующее...</span></div>
<div class="a gs" style="top:281.1px"></div>
<svg style="left:499px;top:284.1px" width="8" height="8" viewBox="0 0 8 8"><rect x="0.500" y="0.500" width="7" height="7" fill="#fafafa" stroke="#9a9a9a"/><rect x="2" y="3.500" width="4" height="1" fill="#444"/></svg>
<div class="t d gb" style="left:511px;top:282.1px">Обозначение</div>
<div class="a gr" style="top:294.4px"></div>
<div class="t d" style="left:511px;top:296.3px;color:#262626">Тип представления</div>
<div class="t d" style="left:624px;top:296.3px;color:#262626">Позиционный н...</div>
<div class="a gs" style="top:307.8px"></div>
<svg style="left:499px;top:310.8px" width="8" height="8" viewBox="0 0 8 8"><rect x="0.500" y="0.500" width="7" height="7" fill="#fafafa" stroke="#9a9a9a"/><rect x="2" y="3.500" width="4" height="1" fill="#444"/></svg>
<div class="t d gb" style="left:511px;top:308.8px">Проект</div>
<div class="a gr" style="top:321.2px"></div>
<div class="t d" style="left:511px;top:323.1px;color:#262626">Строительная площадка</div>
<div class="a gr" style="top:334.5px"></div>
<div class="t d" style="left:511px;top:336.4px;color:#262626">Номер</div>
<div class="t d" style="left:624px;top:336.4px;color:#262626">3</div>
<div class="a gr" style="top:347.9px"></div>
<div class="t d" style="left:511px;top:349.8px;color:#262626">Включать в экспликацию</div>
<div class="a" style="left:624px;top:350.4px;width:9px;height:9px;background:#fff;border:1px solid #c4c4c4"></div>
<svg style="left:625px;top:351.4px" width="7" height="7" viewBox="0 0 7 7"><path d="M1 3.500l2 2 3-4.500" fill="none" stroke="#111" stroke-width="1.300"/></svg>
<div class="t d" style="left:636.500px;top:349.8px;color:#262626">Да</div>
<div class="a gs" style="top:361.2px"></div>
<svg style="left:499px;top:364.2px" width="8" height="8" viewBox="0 0 8 8"><rect x="0.500" y="0.500" width="7" height="7" fill="#fafafa" stroke="#9a9a9a"/><rect x="2" y="3.500" width="4" height="1" fill="#444"/></svg>
<div class="t d gb" style="left:511px;top:362.2px">Графика</div>
<div class="a gr" style="top:374.6px"></div>
<div class="t d" style="left:511px;top:376.5px;color:#262626">Штриховка</div>
<div class="t d" style="left:624px;top:376.5px;color:#262626">Тип - [Из линий]</div>
<div class="a gr" style="top:388.0px"></div>
<div class="t d" style="left:511px;top:389.9px;color:#262626">Перекрывать примитивы</div>
<div class="a" style="left:624px;top:390.5px;width:9px;height:9px;background:#fff;border:1px solid #c4c4c4"></div>
<div class="t d" style="left:636.500px;top:389.9px;color:#262626">Нет</div>
<div class="a gr" style="top:401.3px"></div>
<div class="t d" style="left:511px;top:403.2px;color:#a6a6a6">Отображать размеры</div>
<div class="a" style="left:624px;top:403.8px;width:9px;height:9px;background:#fff;border:1px solid #d8d8d8"></div>
<div class="t d" style="left:636.500px;top:403.2px;color:#a6a6a6">Нет</div>
<div class="a gs" style="top:414.7px"></div>
<svg style="left:499px;top:417.7px" width="8" height="8" viewBox="0 0 8 8"><rect x="0.500" y="0.500" width="7" height="7" fill="#fafafa" stroke="#9a9a9a"/><rect x="2" y="3.500" width="4" height="1" fill="#444"/></svg>
<div class="t d gb" style="left:511px;top:415.7px">Геометрия</div>
<div class="a gr" style="top:428.0px"></div>
<div class="t d" style="left:511px;top:429.9px;color:#262626">Высота, м</div>
<div class="t d" style="left:624px;top:429.9px;color:#262626">18.3</div>
<div class="a gr" style="top:441.4px"></div>
<div class="t d" style="left:511px;top:443.3px;color:#5788c8">Длина, м</div>
<div class="t d" style="left:624px;top:443.3px;color:#5788c8">&lt;Указать на че...</div>
<div class="a gr" style="top:454.8px"></div>
<div class="t d" style="left:511px;top:456.7px;color:#5788c8">Ширина, м</div>
<div class="t d" style="left:624px;top:456.7px;color:#5788c8">&lt;Указать на че...</div>
<div class="a gr" style="top:468.1px"></div>
<div class="t d" style="left:511px;top:470.0px;color:#8aaedc">Периметр, м</div>
<div class="t d" style="left:624px;top:470.0px;color:#a4a4a4">0</div>
<div class="a gr" style="top:481.5px"></div>
<div class="t d" style="left:511px;top:483.4px;color:#8aaedc">Площадь проезжей част...</div>
<div class="t d" style="left:624px;top:483.4px;color:#a4a4a4">0</div>
<div class="a gr" style="top:494.8px"></div>
<div class="t d" style="left:511px;top:496.7px;color:#8aaedc">Непокрытая площадь, м2</div>
<div class="t d" style="left:624px;top:496.7px;color:#a4a4a4">0</div>
<div class="a" style="left:497px;top:508.2px;width:200px;height:1px;background:#dcdcdc"></div>
<div class="a" style="left:497px;top:644px;width:200px;height:15px;background:#f0f0f0"></div>
<div class="a" style="left:511px;top:650.500px;width:171px;height:2px;background:#8c8c8c;border-radius:1px"></div>
<svg style="left:499px;top:668px" width="11" height="11" viewBox="0 0 11 11"><circle cx="5.500" cy="5.500" r="5" fill="#cfe8f8" stroke="#7fb4dc"/><text x="5.500" y="8.800" font-family="Liberation Sans, sans-serif" font-size="8.500" font-weight="bold" fill="#2a6aa8" text-anchor="middle">?</text></svg>
<svg style="left:514px;top:667px" width="14" height="13" viewBox="0 0 14 13"><rect x="0" y="0" width="11" height="2.500" fill="#8fb4e4"/><rect x="0.500" y="2.500" width="10" height="9.500" fill="#f4f4f8" stroke="#5a6a8a"/><circle cx="9.500" cy="8.500" r="3.500" fill="#e8e8e8" stroke="#555"/><circle cx="9.500" cy="8.500" r="1.300" fill="#555"/></svg>
<svg style="left:534px;top:667px" width="12" height="12" viewBox="0 0 12 12"><rect x="0.500" y="0.500" width="11" height="11" fill="#e4e4ec" stroke="#4a5a7a"/><rect x="3" y="1" width="6" height="3.500" fill="#c8d4ec"/><rect x="6" y="5" width="5" height="5" fill="#e8a0b0"/></svg>
<div class="t d" style="left:703.500px;top:221px">Классификатор</div>
<div class="t d" style="left:830.500px;top:221px;letter-spacing:-0.3px">Поиск<span style="margin-left:.6px">:</span></div>
<div class="a" style="left:862px;top:220px;width:139.500px;height:14px;background:#fff;border-radius:2px;border-bottom:1px solid #9a9a9a"></div>
<div class="t d" style="left:1020px;top:221px">175</div>
<svg style="left:1055.500px;top:222.800px" width="9" height="7.500" viewBox="0 0 9 9" preserveAspectRatio="none"><path d="M4.500 0L9 4.500H6.500V9h-4V4.500H0z" fill="#7a7a7a"/></svg>
<svg style="left:1073.800px;top:221.800px" width="9" height="7.500" viewBox="0 0 9 9" preserveAspectRatio="none"><path d="M4.500 9L9 4.500H6.500V0h-4v4.500H0z" fill="#7a7a7a"/></svg>
<div class="a" style="left:704px;top:237px;width:382px;height:196px;background:#fff;border-top:1.500px solid #8c8c8c;border-left:2px solid #8c8c8c;border-bottom:1px solid #d0d0d0"></div>
<div class="a" style="left:706px;top:238.2px;width:367px;height:18.300px;background:#cccbcd"></div>
<svg style="left:711.500px;top:244.7px" width="6" height="6" viewBox="0 0 6 6"><path d="M0 6h6V0z" fill="#2a2a2a"/></svg>
<div class="t d" style="left:721px;top:241.6px">Существующие здания</div>
<div class="a" style="left:707px;top:257.4px;width:117px;height:18.500px;background:#f2f2f2;border:1px solid #d4d4d4;border-radius:3px"></div>
<svg style="left:709px;top:261.0px" width="12" height="12" viewBox="0 0 12 12"><rect x="0" y="0" width="12" height="12" fill="#7aa2d0"/><rect x="1" y="1" width="10" height="3" fill="#c8dcf0"/><rect x="1" y="5" width="5" height="6" fill="#dce8f4"/><rect x="7" y="5" width="4" height="6" fill="#5a86c0"/></svg>
<div class="t d" style="left:724px;top:261.3px">Здание существующее</div>
<div class="a" style="left:706px;top:277.5px;width:367px;height:18.300px;background:#cccbcd"></div>
<svg style="left:711.500px;top:284.0px" width="6" height="6" viewBox="0 0 6 6"><path d="M0 6h6V0z" fill="#2a2a2a"/></svg>
<div class="t d" style="left:721px;top:280.9px">Сносимые здания</div>
<svg style="left:709px;top:300.3px" width="12" height="12" viewBox="0 0 12 12"><rect x="0" y="0" width="12" height="12" fill="#8c8c94"/><rect x="1" y="1" width="10" height="3" fill="#c8c8d0"/><path d="M3 5l6 6M9 5l-6 6" stroke="#d8204a" stroke-width="2.200"/></svg>
<div class="t d" style="left:724px;top:300.6px">Здание сносимое</div>
<div class="a" style="left:706px;top:316.8px;width:367px;height:18.300px;background:#cccbcd"></div>
<svg style="left:711.500px;top:323.3px" width="6" height="6" viewBox="0 0 6 6"><path d="M0 6h6V0z" fill="#2a2a2a"/></svg>
<div class="t d" style="left:721px;top:320.2px">Возводимые здания</div>
<svg style="left:709px;top:339.6px" width="12" height="12" viewBox="0 0 12 12"><rect x="0" y="0" width="12" height="12" fill="#6a8ab0"/><path d="M1 2h10M1 4.500h10M1 7h10M1 9.500h10" stroke="#a8c4e0" stroke-width="1"/><rect x="7" y="6" width="4" height="5" fill="#4a6a9a"/></svg>
<div class="t d" style="left:724px;top:339.9px">Здание возводимое</div>
<div class="a" style="left:706px;top:356.1px;width:367px;height:18.300px;background:#cccbcd"></div>
<svg style="left:711.500px;top:362.6px" width="6" height="6" viewBox="0 0 6 6"><path d="M0 6h6V0z" fill="#2a2a2a"/></svg>
<div class="t d" style="left:721px;top:359.5px">Проектируемые здания</div>
<svg style="left:709px;top:378.9px" width="12" height="12" viewBox="0 0 12 12"><rect x="0.500" y="0.500" width="11" height="11" fill="#e8f0f8" stroke="#6a8ab8"/><path d="M2 10L10 2" stroke="#5a86c0" stroke-width="1.500"/><rect x="2" y="6" width="4" height="4" fill="#8fb4e0"/></svg>
<div class="t d" style="left:724px;top:379.2px">Здание проектируемое</div>
<div class="a" style="left:706px;top:395.4px;width:367px;height:18.300px;background:#cccbcd"></div>
<svg style="left:711.500px;top:401.9px" width="6" height="6" viewBox="0 0 6 6"><path d="M0 6h6V0z" fill="#2a2a2a"/></svg>
<div class="t d" style="left:721px;top:398.8px">Временные здания</div>
<div class="a" style="left:706px;top:413.500px;width:378px;height:18.500px;background:#f2f2f2"></div>
<div class="a" style="left:719px;top:414.800px;width:354px;height:2px;background:#dbdbdb"></div>
<div class="a" style="left:719px;top:423.800px;width:241px;height:2px;background:#8c8c8c;border-radius:1px"></div>
<div class="a" style="left:1074px;top:238.500px;width:10px;height:194px;background:#f6f6f6"></div>
<div class="a" style="left:1078.500px;top:251px;width:2px;height:13px;background:#8c8c8c;border-radius:1px"></div>
<div class="a" style="left:704px;top:438px;width:382px;height:222px;background:#f2f1f3;border:1px solid #ebebeb;border-bottom:1px solid #a8a8a8"></div>
<div class="t d" style="left:708px;top:441.500px">Справочная информация отсутствует</div>
<svg style="left:1076px;top:445px" width="6" height="4" viewBox="0 0 6 4"><path d="M0 4h6L3 0z" fill="#9a9a9a"/></svg>
<svg style="left:1076px;top:650px" width="6" height="4" viewBox="0 0 6 4"><path d="M0 0h6L3 4z" fill="#8a8a8a"/></svg>
<div class="a" style="left:966px;top:664.500px;width:57px;height:19px;background:#fcfcfc;border:1.500px solid #5a8ac0;border-radius:3px"></div>
<div class="t d" style="left:966px;top:668px;width:57px;text-align:center">ОК</div>
<div class="a" style="left:1030px;top:665px;width:57px;height:18px;background:#fcfcfc;border:1px solid #d8d8d8;border-bottom-color:#c0c0c0;border-radius:3px"></div>
<div class="t d" style="left:1030px;top:668px;width:57px;text-align:center">Отмена</div>

</div>
</body>
</html>
